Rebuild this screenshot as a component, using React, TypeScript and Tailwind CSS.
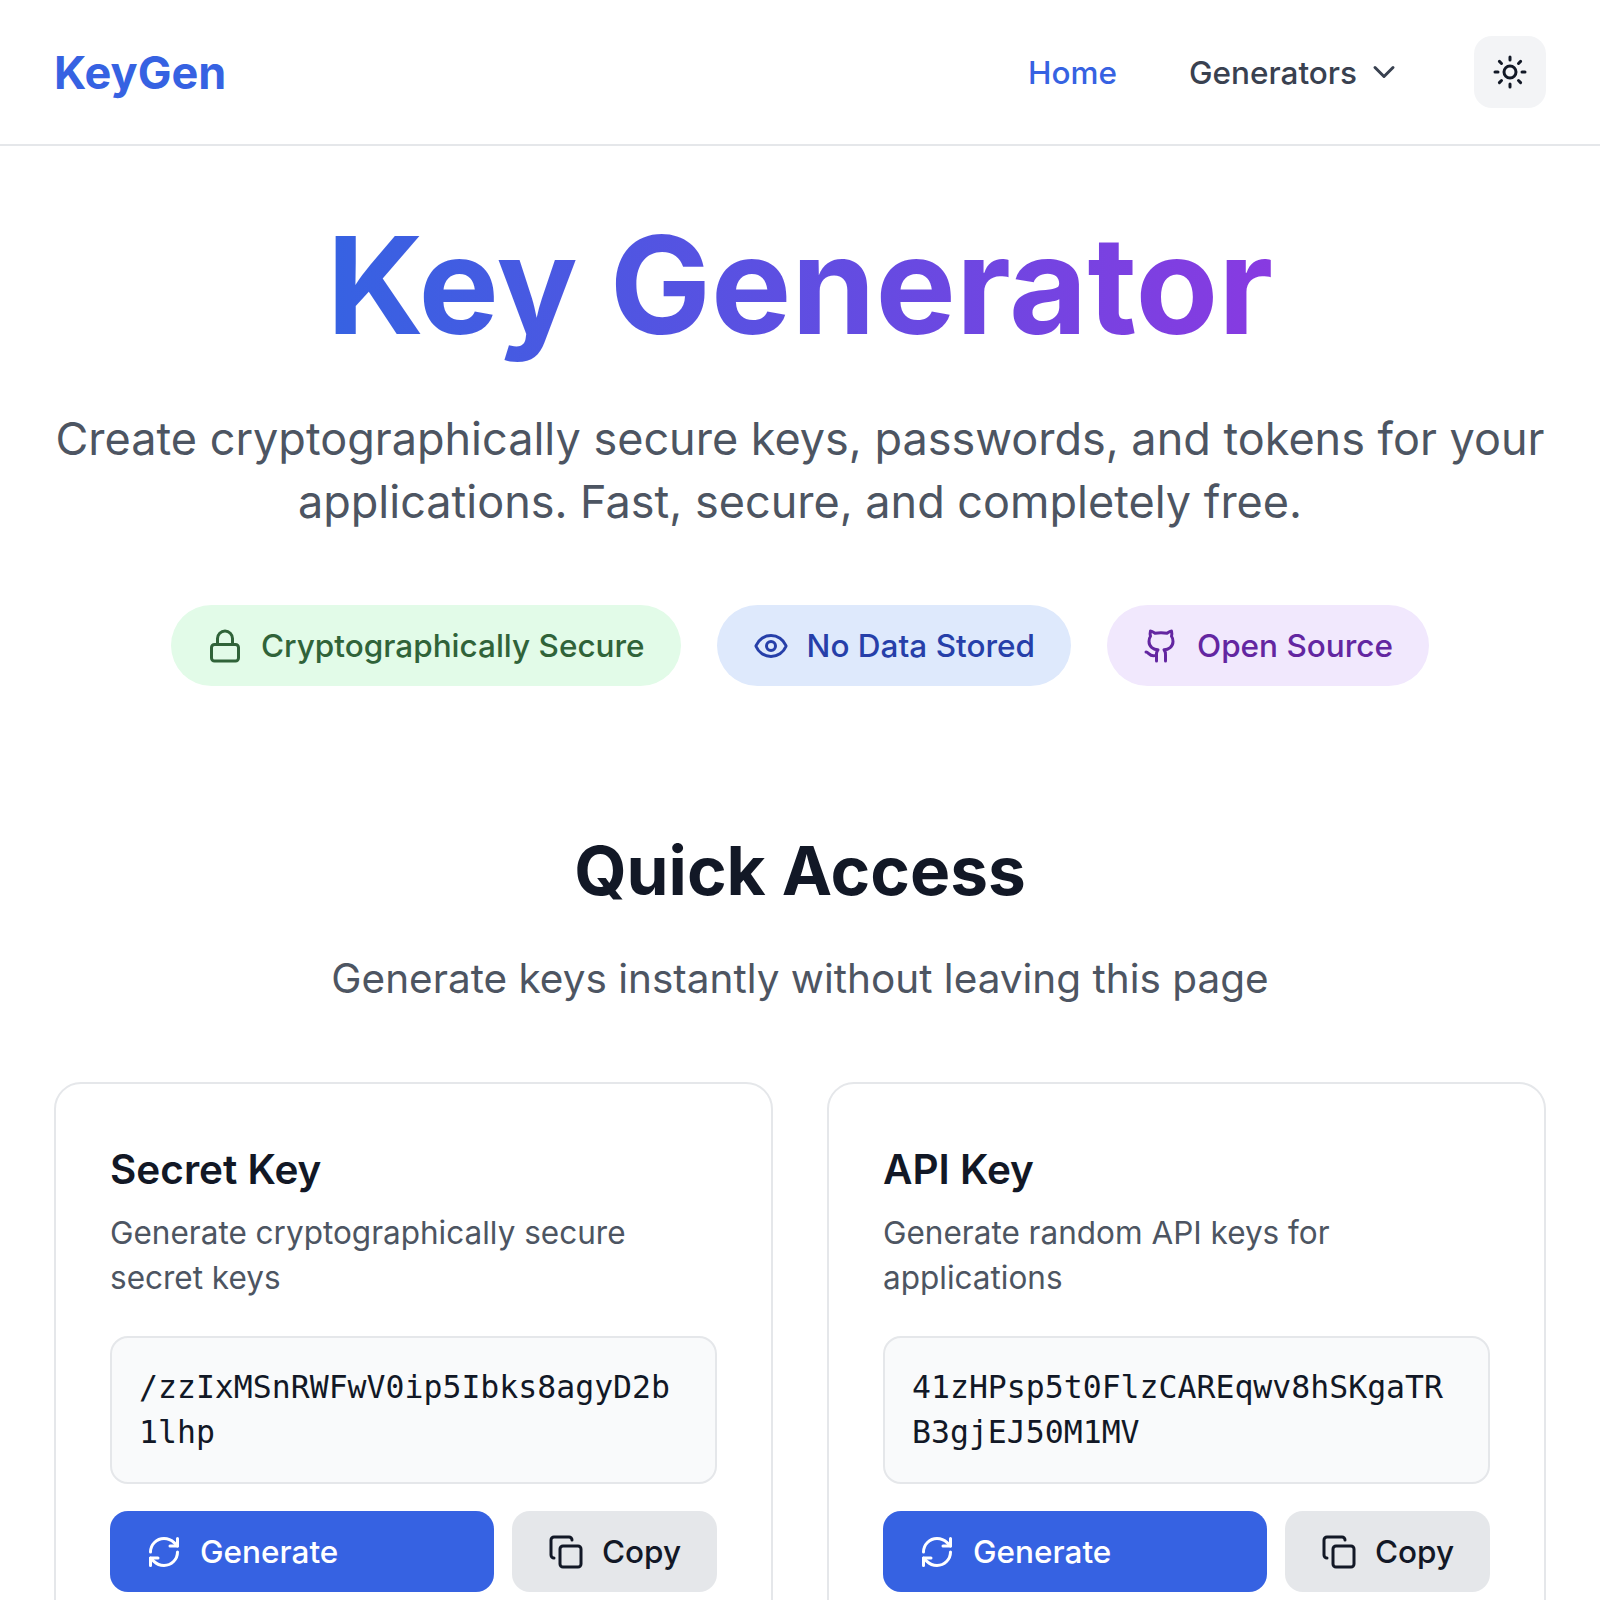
import { ChevronDown, Copy, Eye, Github, Lock, RefreshCw, Sun, type LucideIcon } from 'lucide-react';

const badges: { label: string; icon: LucideIcon; tone: string }[] = [
  { label: 'Cryptographically Secure', icon: Lock, tone: 'bg-[#e2fbe8] text-[#306339]' },
  { label: 'No Data Stored', icon: Eye, tone: 'bg-[#dee9fc] text-[#263fa9]' },
  { label: 'Open Source', icon: Github, tone: 'bg-[#f1e8fd] text-[#6326a1]' },
];

const generators = [
  {
    title: 'Secret Key',
    description: 'Generate cryptographically secure secret keys',
    value: '/zzIxMSnRWFwV0ip5Ibks8agyD2b1lhp',
  },
  {
    title: 'API Key',
    description: 'Generate random API keys for applications',
    value: '41zHPsp5t0FlzCAREqwv8hSKgaTRB3gjEJ50M1MV',
  },
];

function Header() {
  return (
    <header className="flex h-[146px] items-center justify-between border-b-2 border-[#e5e7ea] bg-white px-[54px]">
      <a className="text-[45px] leading-[63px] font-bold text-[#3662e2]">KeyGen</a>
      <nav className="flex items-center gap-[72px] text-[31.5px] leading-[45px] font-medium">
        <a className="text-[#3662e2]">Home</a>
        <button className="flex items-center gap-[9px] text-[#394150]">
          Generators
          <ChevronDown size={36} />
        </button>
        <button
          aria-label="Toggle theme"
          className="flex size-[72px] items-center justify-center rounded-[18px] bg-[#f3f4f6] text-[#121826]"
        >
          <Sun size={36} />
        </button>
      </nav>
    </header>
  );
}

function GeneratorCard({ title, description, value }: (typeof generators)[number]) {
  return (
    <article className="rounded-[27px] border-2 border-[#e5e7ea] bg-white p-[54px]">
      <h3 className="text-[40.5px] leading-[63px] font-semibold">{title}</h3>
      <p className="mt-[9px] text-[31.5px] leading-[45px] text-[#4d5562]">{description}</p>
      <div className="mt-9 rounded-[18px] border-2 border-[#e5e7ea] bg-[#f9fafb] p-[27px] font-['DejaVu_Sans_Mono',monospace] text-[31.5px] leading-[45px] break-all">
        {value}
      </div>
      <div className="mt-[27px] flex gap-[18px] text-[31.5px] leading-[45px] font-medium">
        <button className="flex flex-1 items-center gap-[18px] rounded-[18px] bg-[#3662e2] px-9 py-[18px] text-white">
          <RefreshCw size={36} />
          Generate
        </button>
        <button className="flex items-center gap-[18px] rounded-[18px] bg-[#e5e7ea] px-9 py-[18px]">
          <Copy size={36} />
          Copy
        </button>
      </div>
    </article>
  );
}

export default function App() {
  return (
    <div className="h-[1600px] overflow-hidden bg-white font-['Inter',sans-serif] text-[#121826] antialiased">
      <Header />
      <main className="px-[54px] pt-[72px]">
        <section className="mb-36 text-center">
          <h1 className="mb-[54px] text-[135px] leading-none font-bold">
            <span className="bg-linear-to-r/srgb from-[#3662e2] to-[#883ae1] bg-clip-text text-transparent">
              Key Generator
            </span>
          </h1>
          <p className="mb-[72px] text-[45px] leading-[63px] text-[#4d5562]">
            Create cryptographically secure keys, passwords, and tokens for your applications. Fast, secure, and
            completely free.
          </p>
          <div className="flex justify-center gap-9">
            {badges.map(({ label, icon: Icon, tone }) => (
              <span
                key={label}
                className={`flex items-center gap-[18px] rounded-full px-9 py-[18px] text-[31.5px] leading-[45px] font-medium ${tone}`}
              >
                <Icon size={36} />
                {label}
              </span>
            ))}
          </div>
        </section>
        <section>
          <div className="mb-[72px] text-center">
            <h2 className="mb-9 text-[67.5px] leading-[81px] font-bold">Quick Access</h2>
            <p className="text-[40.5px] leading-[63px] text-[#4d5562]">
              Generate keys instantly without leaving this page
            </p>
          </div>
          <div className="grid grid-cols-2 gap-[54px]">
            {generators.map((generator) => (
              <GeneratorCard key={generator.title} {...generator} />
            ))}
          </div>
        </section>
      </main>
    </div>
  );
}
